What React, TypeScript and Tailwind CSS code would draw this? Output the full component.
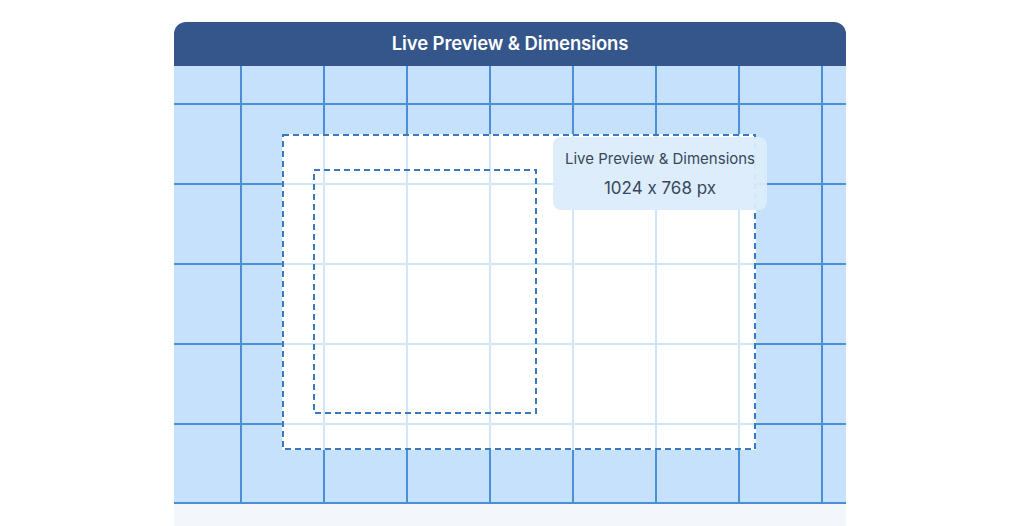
import React from 'react'

const Dashed: React.FC<{ color?: string }> = ({ color = '#3b78c2' }) => (
  <svg className="absolute inset-0 w-full h-full pointer-events-none" preserveAspectRatio="none">
    <rect
      x="1"
      y="1"
      width="calc(100% - 2px)"
      height="calc(100% - 2px)"
      fill="none"
      stroke={color}
      strokeWidth="2"
      strokeDasharray="6 4"
    />
  </svg>
)

const App: React.FC = () => {
  return (
    <div className="w-[1021px] h-[526px] bg-white overflow-hidden font-['Inter','Liberation_Sans',sans-serif] [font-feature-settings:'calt'_0]">
      <div className="ml-[174px] mt-[22px] w-[672px] flex flex-col">
        <div className="h-[44px] rounded-t-[12px] bg-[#34568b] flex items-center justify-center">
          <h1 className="text-white text-[18.5px] font-semibold tracking-[-0.1px]">Live Preview &amp; Dimensions</h1>
        </div>

        <div className="relative h-[438px] bg-[#c6e1fb] bg-[linear-gradient(to_right,#4a8fd8_2px,transparent_2px),linear-gradient(to_bottom,#4a8fd8_2px,transparent_2px)] bg-[size:83px_80px] bg-[position:66px_37px] border-b-2 border-[#4a8fd8]">
          <div className="absolute left-[108px] top-[68px] w-[474px] h-[316px] bg-white bg-[linear-gradient(to_right,#d2e6f9_2px,transparent_2px),linear-gradient(to_bottom,#d2e6f9_2px,transparent_2px)] bg-[size:83px_80px] bg-[position:41px_49px]">
            <Dashed />
            <div className="absolute left-[31px] top-[35px] w-[224px] h-[245px]">
              <Dashed />
            </div>
            <div className="absolute left-[271px] top-[3px] w-[214px] h-[73px] rounded-[8px] bg-[#dcecfb]/95 flex flex-col items-center justify-center gap-[14px] text-[#38485b]">
              <p className="text-[15px] leading-none">Live Preview &amp; Dimensions</p>
              <p className="text-[17px] leading-none">1024 x 768 px</p>
            </div>
          </div>
        </div>

        <div className="h-[24px] bg-[#f3f7fb]" />
      </div>
    </div>
  )
}

export default App
